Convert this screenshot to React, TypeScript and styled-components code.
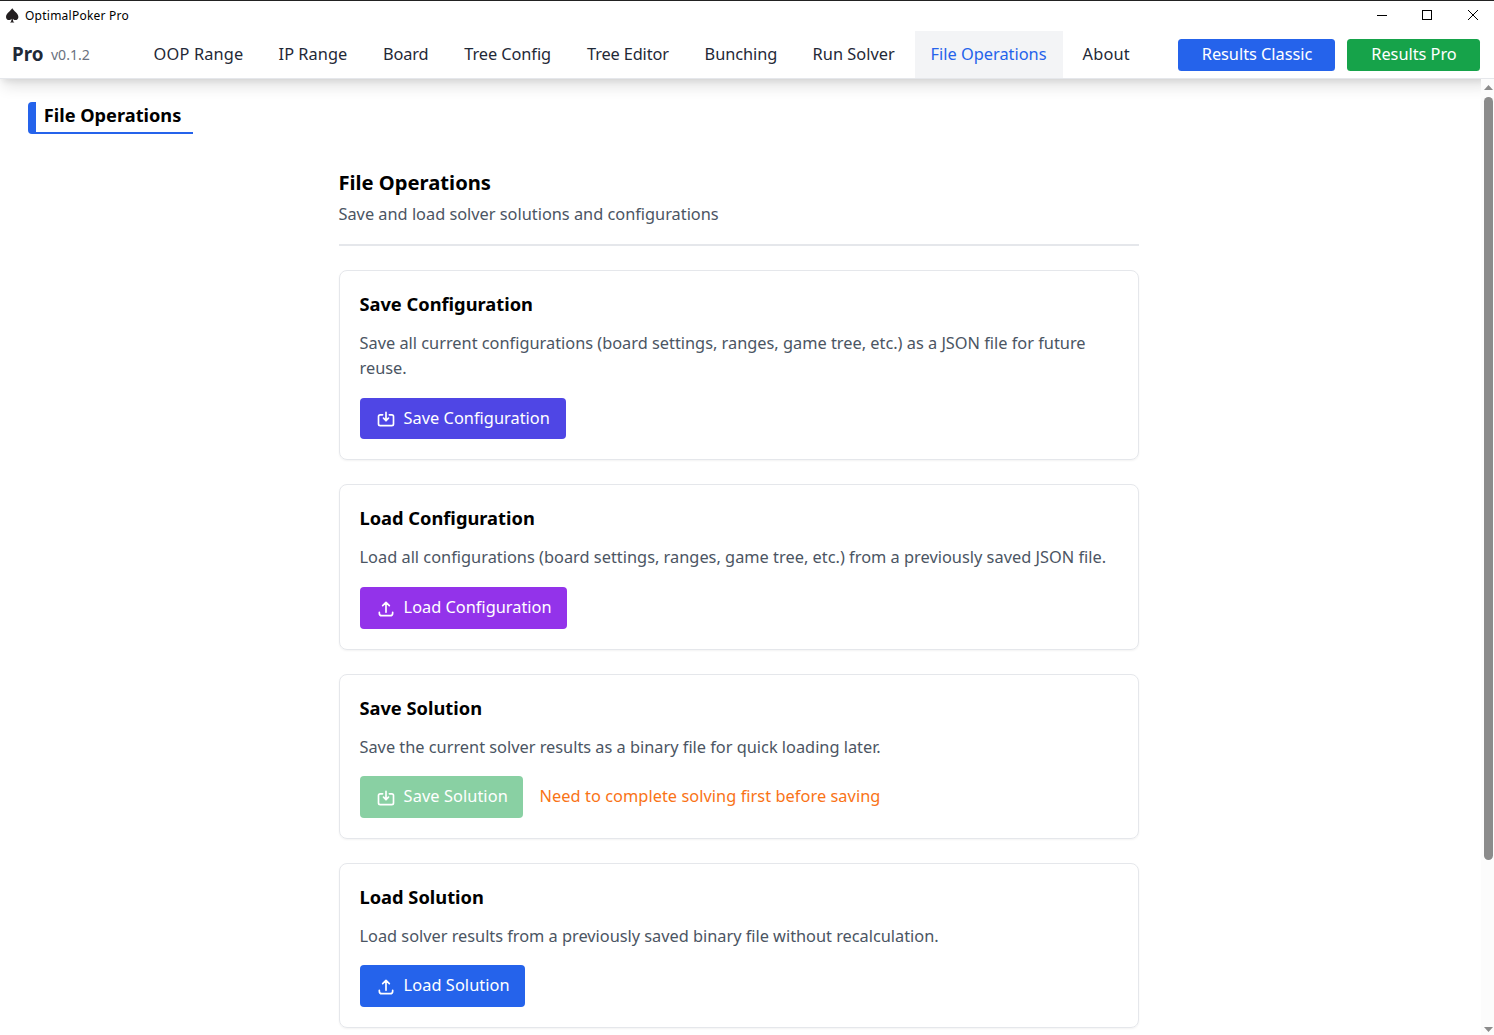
import React from "react";
import styled, { createGlobalStyle } from "styled-components";

const GlobalStyle = createGlobalStyle`
  *, *::before, *::after { box-sizing: border-box; }
  body {
    margin: 0;
    overflow: hidden;
    background: #fff;
    color: #000;
    font-family: "Noto Sans", "Open Sans", sans-serif;
    font-size: 16.35px;
    line-height: 25px;
  }
  h1, h2, h3, p { margin: 0; }
  button { font: inherit; border: 0; margin: 0; padding: 0; }
`;

const Window = styled.div`
  display: flex;
  flex-direction: column;
  width: 1494px;
  height: 1035px;
  overflow: hidden;
  border-top: 1px solid #222;
`;

const TitleBar = styled.div`
  display: flex;
  align-items: center;
  flex: none;
  height: 30px;
  padding: 0 16px 0 6px;

  > svg { margin-bottom: 2px; }
`;

const WindowTitle = styled.span`
  flex: 1;
  margin-left: 6px;
  font-size: 12px;
  line-height: 16px;
  letter-spacing: 0.24px;
`;

const WindowControls = styled.div`
  display: flex;
  gap: 35px;
  margin-bottom: 2px;

  svg { display: block; }
  svg:last-child { margin-left: 1px; }
`;

const Header = styled.header`
  position: relative;
  z-index: 1;
  display: flex;
  align-items: stretch;
  flex: none;
  height: 48px;
  background: #fff;
  border-bottom: 1px solid #e5e7eb;
  box-shadow: 0 10px 15px -3px rgba(0, 0, 0, 0.12), 0 4px 6px -2px rgba(0, 0, 0, 0.08);
`;

const Brand = styled.div`
  display: flex;
  align-items: flex-start;
  width: 138px;
  padding: 11px 0 0 12px;
`;

const BrandName = styled.span`
  font-size: 18.8px;
  font-weight: 700;
  color: #1f2937;
`;

const Version = styled.span`
  margin-left: 7.5px;
  font-size: 14.1px;
  color: #6b7280;
`;

const Nav = styled.nav`
  display: flex;
  flex: 1;
  gap: 4px;
`;

const NavItem = styled.a<{ $width: number; $spacing: number; $active: boolean }>`
  width: ${(p) => p.$width}px;
  padding: 11px 0 0 15.6px;
  white-space: nowrap;
  letter-spacing: ${(p) => p.$spacing}px;
  color: ${(p) => (p.$active ? "#2563eb" : "#1f2937")};
  background: ${(p) => (p.$active ? "#f3f4f6" : "transparent")};
`;

const HeaderActions = styled.div`
  display: flex;
  gap: 12px;
  padding: 8px 14px 0 0;
`;

const ResultButton = styled.button<{ $width: number; $color: string }>`
  width: ${(p) => p.$width}px;
  height: 32px;
  padding: 0 0 1px 1px;
  border-radius: 3.5px;
  color: #fff;
  letter-spacing: -0.03px;
  background: ${(p) => p.$color};
`;

const Body = styled.div`
  display: flex;
  flex: 1;
  min-height: 0;
`;

const Main = styled.main`
  flex: 1;
  padding: 23px 31px 0 28px;
  overflow: hidden;
`;

const SectionTitle = styled.h1`
  width: 165px;
  height: 32px;
  padding-left: 7.8px;
  border-left: 8px solid #2563eb;
  border-bottom: 2px solid #2563eb;
  border-radius: 4px 0 0 4px;
  font-size: 18.2px;
  line-height: 26px;
  font-weight: 700;
`;

const Content = styled.div`
  width: 800px;
  margin: 35px auto 0;
`;

const Intro = styled.div`
  padding-bottom: 17px;
  margin-bottom: 24px;
  border-bottom: 2px solid #e5e7eb;

  h2 {
    margin: 0 0 6px -0.6px;
    font-size: 20.2px;
    line-height: 27px;
    font-weight: 700;
  }
`;

const Muted = styled.p<{ $spacing: number }>`
  margin: 1px 0 0 -0.5px;
  color: #4b5563;
  letter-spacing: ${(p) => p.$spacing}px;
`;

const CardList = styled.div`
  display: flex;
  flex-direction: column;
  gap: 24px;
`;

const Card = styled.section<{ $height: number }>`
  display: flex;
  flex-direction: column;
  height: ${(p) => p.$height}px;
  padding: 19px 20px 20px;
  border: 1px solid #e5e7eb;
  border-radius: 8px;
  box-shadow: 0 1px 2px rgba(0, 0, 0, 0.05);

  h3 {
    margin: 0 0 12px -0.6px;
    font-size: 18.3px;
    line-height: 28px;
    font-weight: 700;
  }
`;

const CardActions = styled.div`
  display: flex;
  align-items: center;
  gap: 16.6px;
  margin-top: auto;
`;

const ActionButton = styled.button<{ $width: number; $height: number; $color: string; $spacing: number }>`
  display: flex;
  align-items: center;
  gap: 7.9px;
  width: ${(p) => p.$width}px;
  height: ${(p) => p.$height}px;
  padding-left: 15.7px;
  border-radius: 4px;
  color: #fff;
  white-space: nowrap;
  letter-spacing: ${(p) => p.$spacing}px;
  background: ${(p) => p.$color};

  svg { flex: none; margin-top: 1px; }
  span { padding-bottom: 1px; }

  &:disabled { opacity: 0.5; }
`;

const Notice = styled.span`
  padding-bottom: 1px;
  color: #f97316;
  letter-spacing: 0.045px;
`;

const ScrollTrack = styled.div`
  position: relative;
  z-index: 2;
  display: flex;
  flex-direction: column;
  align-items: center;
  width: 13px;
  padding: 6px 0 3px 2px;
  background: #fcfcfc;

  svg { display: block; }
`;

const ScrollThumb = styled.div`
  width: 9px;
  height: 763px;
  margin: 7px 0 auto;
  border-radius: 4.5px;
  background: #8b8b8b;
`;

const SpadeIcon = () => (
  <svg width="13" height="15" viewBox="0 0 13 15" fill="#231f20">
    <path d="M6.2 0C5.5 2.3 0 5.3 0 8.9c0 2 1.4 3.2 3 3.2 1.1 0 2-.5 2.6-1.4-.1 1.9-.5 3.2-1.7 3.8h4.6c-1.2-.6-1.6-1.9-1.7-3.8.6.9 1.5 1.4 2.6 1.4 1.6 0 3-1.2 3-3.2C12.4 5.3 6.9 2.3 6.200 0z" />
  </svg>
);

const SaveIcon = () => (
  <svg width="20" height="20" viewBox="0 0 24 24" fill="none" stroke="currentColor" strokeWidth="2" strokeLinecap="round" strokeLinejoin="round">
    <path d="M8 7H5a2 2 0 00-2 2v9a2 2 0 002 2h14a2 2 0 002-2V9a2 2 0 00-2-2h-3m-1 4l-3 3m0 0l-3-3m3 3V4" />
  </svg>
);

const UploadIcon = () => (
  <svg width="20" height="20" viewBox="0 0 24 24" fill="none" stroke="currentColor" strokeWidth="2" strokeLinecap="round" strokeLinejoin="round">
    <path d="M4 16v1a3 3 0 003 3h10a3 3 0 003-3v-1m-4-8l-4-4m0 0L8 8m4-4v12" />
  </svg>
);

const navItems = [
  { label: "OOP Range", width: 121, spacing: 0.16 },
  { label: "IP Range", width: 100.3, spacing: 0.03 },
  { label: "Board", width: 77.4, spacing: -0.1 },
  { label: "Tree Config", width: 118.8, spacing: -0.08 },
  { label: "Tree Editor", width: 113.5, spacing: -0.14 },
  { label: "Bunching", width: 104, spacing: -0.05 },
  { label: "Run Solver", width: 114, spacing: 0.03 },
  { label: "File Operations", width: 148, spacing: 0 },
  { label: "About", width: 79, spacing: 0.2 },
];

type Operation = {
  title: string;
  text: string;
  textSpacing: number;
  height: number;
  icon: "save" | "load";
  color: string;
  width: number;
  buttonHeight: number;
  spacing: number;
  notice?: string;
};

const operations: Operation[] = [
  {
    title: "Save Configuration",
    text: "Save all current configurations (board settings, ranges, game tree, etc.) as a JSON file for future reuse.",
    textSpacing: -0.005, height: 190, icon: "save", color: "#4f46e5", width: 206, buttonHeight: 41, spacing: 0.02,
  },
  {
    title: "Load Configuration",
    text: "Load all configurations (board settings, ranges, game tree, etc.) from a previously saved JSON file.",
    textSpacing: 0.008, height: 166, icon: "load", color: "#9333ea", width: 207, buttonHeight: 42, spacing: 0,
  },
  {
    title: "Save Solution",
    text: "Save the current solver results as a binary file for quick loading later.",
    textSpacing: -0.01, height: 165, icon: "save", color: "#16a34a", width: 163, buttonHeight: 42, spacing: 0.08,
    notice: "Need to complete solving first before saving",
  },
  {
    title: "Load Solution",
    text: "Load solver results from a previously saved binary file without recalculation.",
    textSpacing: -0.02, height: 165, icon: "load", color: "#2563eb", width: 165, buttonHeight: 42, spacing: 0.07,
  },
];

export default function App() {
  return (
    <>
      <GlobalStyle />
      <Window>
        <TitleBar>
          <SpadeIcon />
          <WindowTitle>OptimalPoker Pro</WindowTitle>
          <WindowControls>
            <svg width="10" height="10"><path d="M0 5.5h10" stroke="#000" /></svg>
            <svg width="10" height="10"><rect x=".5" y=".5" width="9" height="9" fill="none" stroke="#000" /></svg>
            <svg width="10" height="10"><path d="M0 0l10 10M10 0L0 10" stroke="#000" /></svg>
          </WindowControls>
        </TitleBar>
        <Header>
          <Brand>
            <BrandName>Pro</BrandName>
            <Version>v0.1.2</Version>
          </Brand>
          <Nav>
            {navItems.map((item) => (
              <NavItem
                key={item.label}
                $width={item.width}
                $spacing={item.spacing}
                $active={item.label === "File Operations"}
              >
                {item.label}
              </NavItem>
            ))}
          </Nav>
          <HeaderActions>
            <ResultButton $width={157} $color="#2563eb">Results Classic</ResultButton>
            <ResultButton $width={133} $color="#16a34a">Results Pro</ResultButton>
          </HeaderActions>
        </Header>
        <Body>
          <Main>
            <SectionTitle>File Operations</SectionTitle>
            <Content>
              <Intro>
                <h2>File Operations</h2>
                <Muted $spacing={-0.01}>Save and load solver solutions and configurations</Muted>
              </Intro>
              <CardList>
                {operations.map((op) => (
                  <Card key={op.title} $height={op.height}>
                    <h3>{op.title}</h3>
                    <Muted $spacing={op.textSpacing}>{op.text}</Muted>
                    <CardActions>
                      <ActionButton
                        $width={op.width}
                        $height={op.buttonHeight}
                        $color={op.color}
                        $spacing={op.spacing}
                        disabled={!!op.notice}
                      >
                        {op.icon === "save" ? <SaveIcon /> : <UploadIcon />}
                        <span>{op.title}</span>
                      </ActionButton>
                      {op.notice && <Notice>{op.notice}</Notice>}
                    </CardActions>
                  </Card>
                ))}
              </CardList>
            </Content>
          </Main>
          <ScrollTrack>
            <svg width="9" height="5"><path d="M4.5 0L9 5H0z" fill="#8b8b8b" /></svg>
            <ScrollThumb />
            <svg width="9" height="5"><path d="M0 0h9L4.5 5z" fill="#8b8b8b" /></svg>
          </ScrollTrack>
        </Body>
      </Window>
    </>
  );
}
